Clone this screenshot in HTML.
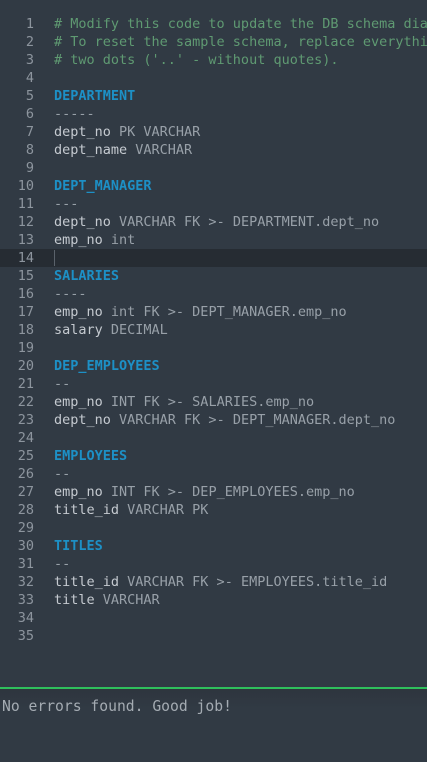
<!DOCTYPE html>
<html><head><meta charset="utf-8"><style>
html,body{margin:0;padding:0;width:427px;height:762px;overflow:hidden;background:#313a44;}
.ed{position:absolute;left:0;top:15px;width:427px;overflow:hidden;font-family:"DejaVu Sans Mono","Liberation Mono",monospace;font-size:13.5px;}
.l{height:18px;line-height:18px;white-space:pre;position:relative;color:#c5cad0;overflow:hidden;}
.n{position:absolute;left:0;width:34px;text-align:right;color:#8d959e;}
.c{position:absolute;left:54px;right:0;overflow:hidden;}
.cm{color:#5f9a72}
.kw{color:#1d90c6;font-weight:bold}
.t{color:#98a0a8}
.act{background:#262c33}
.cur{display:inline-block;width:1px;height:16px;background:#5a626b;vertical-align:middle}
.bar{position:absolute;left:0;top:687px;width:427px;height:2px;background:#2fbf5c}
.out{position:absolute;left:0;top:689px;width:427px;height:73px;background:linear-gradient(#2e353e,#313a44 20px);}
.msg{position:absolute;left:2px;top:698px;font-family:"DejaVu Sans Mono","Liberation Mono",monospace;font-size:14.7px;line-height:18px;color:#a4abb2;white-space:pre}
</style></head><body>
<div class="ed">
<div class="l"><span class="n">1</span><span class="c cm"># Modify this code to update the DB schema diagram.</span></div>
<div class="l"><span class="n">2</span><span class="c cm"># To reset the sample schema, replace everything with</span></div>
<div class="l"><span class="n">3</span><span class="c cm"># two dots ('..' - without quotes).</span></div>
<div class="l"><span class="n">4</span></div>
<div class="l"><span class="n">5</span><span class="c kw">DEPARTMENT</span></div>
<div class="l"><span class="n">6</span><span class="c t">-----</span></div>
<div class="l"><span class="n">7</span><span class="c">dept_no <span class="t">PK VARCHAR</span></span></div>
<div class="l"><span class="n">8</span><span class="c">dept_name <span class="t">VARCHAR</span></span></div>
<div class="l"><span class="n">9</span></div>
<div class="l"><span class="n">10</span><span class="c kw">DEPT_MANAGER</span></div>
<div class="l"><span class="n">11</span><span class="c t">---</span></div>
<div class="l"><span class="n">12</span><span class="c">dept_no <span class="t">VARCHAR FK &gt;- DEPARTMENT.dept_no</span></span></div>
<div class="l"><span class="n">13</span><span class="c">emp_no <span class="t">int</span></span></div>
<div class="l act"><span class="n">14</span><span class="c"><span class="cur"></span></span></div>
<div class="l"><span class="n">15</span><span class="c kw">SALARIES</span></div>
<div class="l"><span class="n">16</span><span class="c t">----</span></div>
<div class="l"><span class="n">17</span><span class="c">emp_no <span class="t">int FK &gt;- DEPT_MANAGER.emp_no</span></span></div>
<div class="l"><span class="n">18</span><span class="c">salary <span class="t">DECIMAL</span></span></div>
<div class="l"><span class="n">19</span></div>
<div class="l"><span class="n">20</span><span class="c kw">DEP_EMPLOYEES</span></div>
<div class="l"><span class="n">21</span><span class="c t">--</span></div>
<div class="l"><span class="n">22</span><span class="c">emp_no <span class="t">INT FK &gt;- SALARIES.emp_no</span></span></div>
<div class="l"><span class="n">23</span><span class="c">dept_no <span class="t">VARCHAR FK &gt;- DEPT_MANAGER.dept_no</span></span></div>
<div class="l"><span class="n">24</span></div>
<div class="l"><span class="n">25</span><span class="c kw">EMPLOYEES</span></div>
<div class="l"><span class="n">26</span><span class="c t">--</span></div>
<div class="l"><span class="n">27</span><span class="c">emp_no <span class="t">INT FK &gt;- DEP_EMPLOYEES.emp_no</span></span></div>
<div class="l"><span class="n">28</span><span class="c">title_id <span class="t">VARCHAR PK</span></span></div>
<div class="l"><span class="n">29</span></div>
<div class="l"><span class="n">30</span><span class="c kw">TITLES</span></div>
<div class="l"><span class="n">31</span><span class="c t">--</span></div>
<div class="l"><span class="n">32</span><span class="c">title_id <span class="t">VARCHAR FK &gt;- EMPLOYEES.title_id</span></span></div>
<div class="l"><span class="n">33</span><span class="c">title <span class="t">VARCHAR</span></span></div>
<div class="l"><span class="n">34</span></div>
<div class="l"><span class="n">35</span></div>
</div>
<div class="bar"></div>
<div class="out"></div>
<div class="msg">No errors found. Good job!</div>
</body></html>
